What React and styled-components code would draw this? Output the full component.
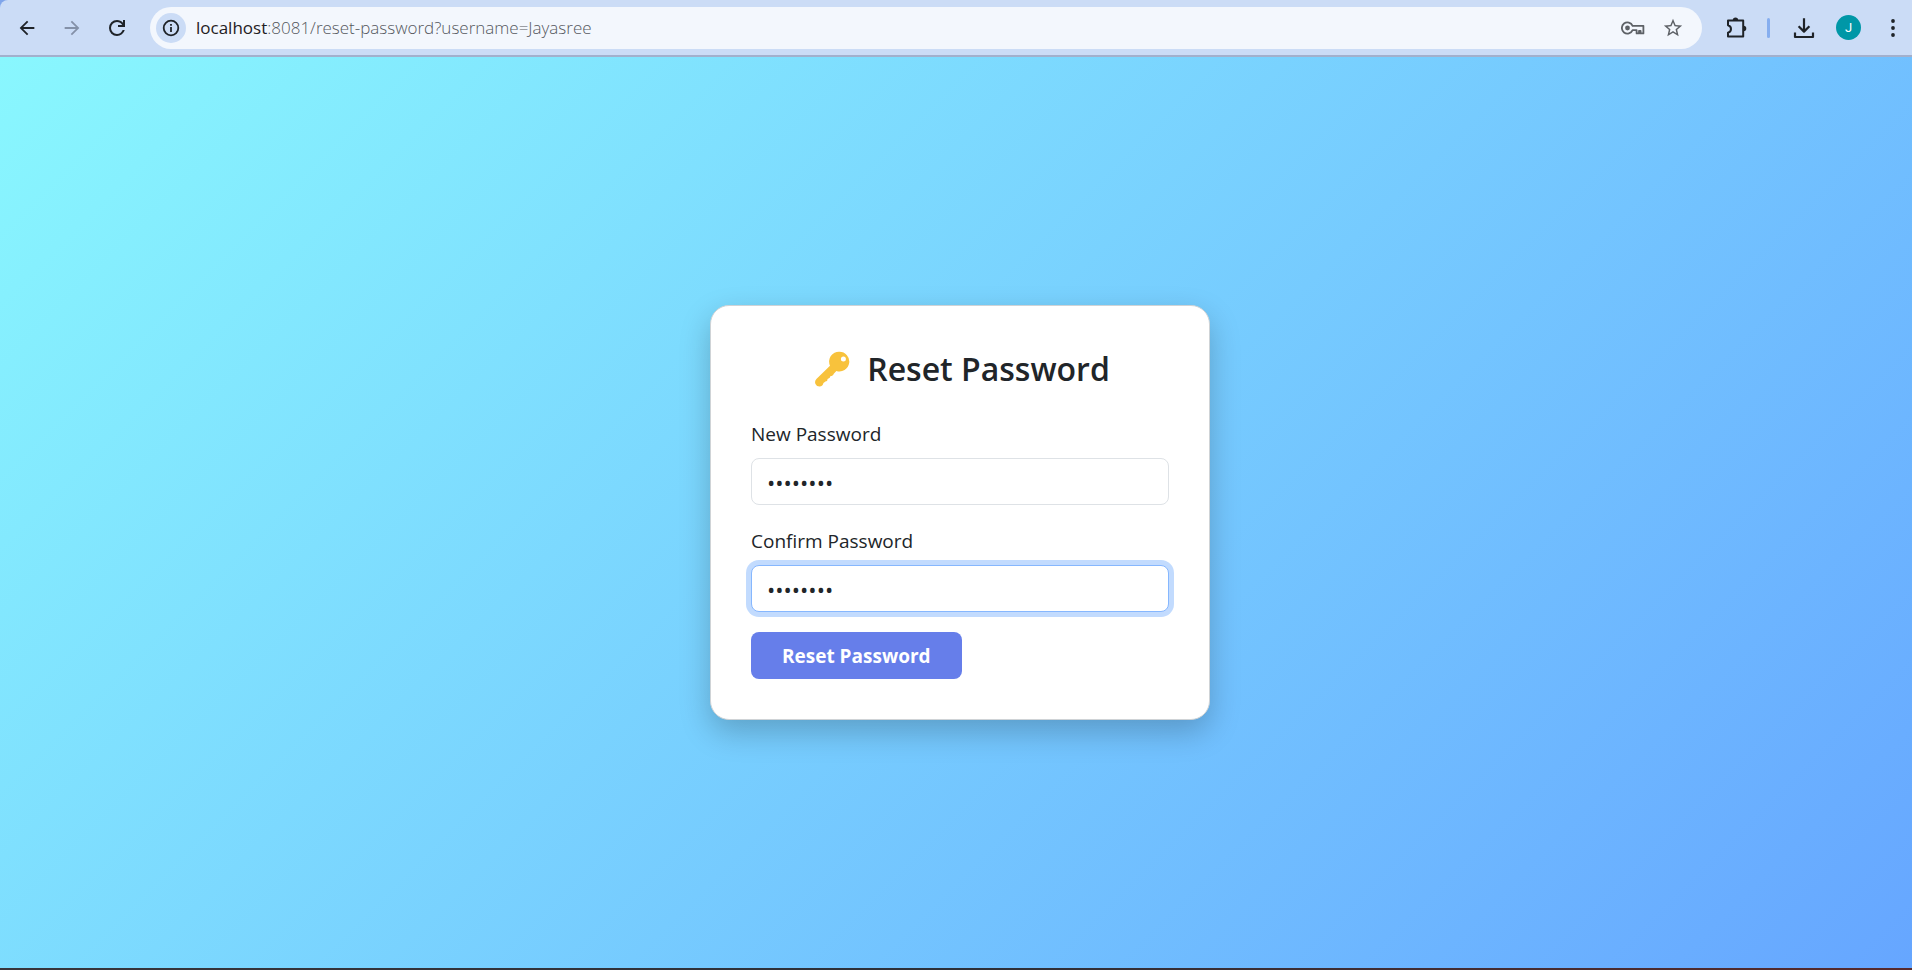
import React, { useState } from "react";
import styled, { createGlobalStyle } from "styled-components";

const GlobalStyle = createGlobalStyle`
  *, *::before, *::after { box-sizing: border-box; }
  body {
    margin: 0;
    color: #212529;
    font-family: "Open Sans", "Segoe UI", "Liberation Sans", sans-serif;
  }
`;

const Window = styled.div`
  display: flex;
  flex-direction: column;
  min-height: 100vh;
  background: #7fa5ea;
`;

const Toolbar = styled.header`
  display: flex;
  align-items: center;
  height: 57px;
  padding: 0 7px 0 15px;
  background: #cbdcf6;
  border-bottom: 2px solid #a2b0cd;
  border-top-left-radius: 8px;
`;

const NavButtons = styled.nav`
  display: flex;
  gap: 21px;
  margin-right: 21px;
`;

const IconButton = styled.button`
  display: grid;
  place-items: center;
  flex: none;
  width: 24px;
  height: 24px;
  padding: 0;
  border: 0;
  background: none;
  color: ${(p) => p.$color || "#1f2328"};
`;

const AddressBar = styled.div`
  display: flex;
  align-items: center;
  flex: 1;
  height: 42px;
  padding: 0 17px 0 6px;
  border-radius: 21px;
  background: #f3f7fd;
  font-size: 17px;
  font-weight: 300;
  line-height: 24px;
`;

const SiteInfo = styled.button`
  display: grid;
  place-items: center;
  flex: none;
  width: 30px;
  height: 30px;
  margin-right: 10px;
  padding: 0;
  border: 0;
  border-radius: 50%;
  background: #cbdcf6;
  color: #1f2328;
`;

const Host = styled.label`
  color: #1f2023;
  font-weight: 400;
`;

const UrlInput = styled.input`
  flex: 1;
  min-width: 0;
  padding: 0;
  border: 0;
  outline: 0;
  background: none;
  color: #55585d;
  font: inherit;
`;

const AddressActions = styled.div`
  display: flex;
  gap: 16px;
`;

const ToolbarActions = styled.div`
  display: flex;
  align-items: center;
  margin-left: 22px;
`;

const Divider = styled.span`
  width: 3px;
  height: 20px;
  margin: 0 22px 0 19px;
  border-radius: 2px;
  background: #86aeef;
`;

const Avatar = styled.button`
  width: 25px;
  height: 25px;
  margin: 0 20px;
  padding: 0;
  border: 0;
  border-radius: 50%;
  background: #0097a7;
  color: #fff;
  font: 13px/25px Roboto, sans-serif;
  text-align: center;
`;

const Page = styled.main`
  display: flex;
  flex: 1;
  align-items: center;
  justify-content: center;
  padding: 24px 0 24px 8px;
  background: linear-gradient(135deg, #89f7fe, #66a6ff);
`;

const Card = styled.section`
  width: 500px;
  max-width: 100%;
  padding: 40px;
  border: 1px solid #cfd3d6;
  border-radius: 19px;
  background: #fff;
  box-shadow: 0 12px 31px rgba(0, 0, 0, 0.22);
`;

const Title = styled.h1`
  display: flex;
  align-items: center;
  justify-content: center;
  gap: 17px;
  margin: 0 0 26px;
  padding-left: 4px;
  font-size: 32px;
  font-weight: 600;
  line-height: 46px;
`;

const Field = styled.div`
  margin-bottom: 20px;
`;

const Label = styled.label`
  display: block;
  margin-bottom: 8px;
  font-size: 19px;
  line-height: 32px;
`;

const PasswordInput = styled.input`
  display: block;
  width: 100%;
  height: 47px;
  padding: 0 15px;
  border: 1px solid ${(p) => (p.$active ? "#86b7fe" : "#dee2e6")};
  border-radius: 8px;
  outline: 0;
  background: #fff;
  box-shadow: ${(p) => (p.$active ? "0 0 0 5px #c2dbfe" : "none")};
  color: #212529;
  font-family: inherit;
  font-size: 22px;
`;

const SubmitButton = styled.button`
  display: block;
  height: 47px;
  padding: 0 31px;
  border: 0;
  border-radius: 8px;
  background: #667eea;
  color: #fff;
  font-family: inherit;
  font-size: 19px;
  font-weight: 700;
  line-height: 30px;
`;

const Taskbar = styled.footer`
  height: 2px;
  background: linear-gradient(90deg, #38353a, #2d3038 50%, #582a2c);
`;

function Icon({ size = 24, path }) {
  return (
    <svg width={size} height={size} viewBox="0 0 24 24" fill="currentColor" aria-hidden="true">
      <path d={path} />
    </svg>
  );
}

const BACK = "M20 11H7.83l5.59-5.59L12 4l-8 8 8 8 1.41-1.41L7.83 13H20v-2z";
const FORWARD = "M4 11h12.17l-5.59-5.59L12 4l8 8-8 8-1.41-1.41L16.17 13H4v-2z";
const RELOAD =
  "M12 20q-3.35 0-5.675-2.325T4 12t2.325-5.675T12 4q1.725 0 3.3.713T18 6.75V4h2v7h-7V9h4.2q-.8-1.4-2.187-2.2T12 6Q9.5 6 7.75 7.75T6 12t1.75 4.25T12 18q1.925 0 3.475-1.1T17.65 14h2.1q-.7 2.65-2.85 4.325T12 20";
const STAR =
  "M22 9.24l-7.19-.62L12 2 9.19 8.63 2 9.24l5.46 4.73L5.82 21 12 17.27 18.18 21l-1.63-7.03L22 9.24zM12 15.4l-3.76 2.27 1-4.28-3.32-2.88 4.38-.38L12 6.1l1.71 4.04 4.38.38-3.32 2.88 1 4.28L12 15.4z";

function InfoIcon() {
  return (
    <svg width="18" height="18" viewBox="0 0 18 18" aria-hidden="true">
      <circle cx="9" cy="9" r="7.3" fill="none" stroke="currentColor" strokeWidth="1.8" />
      <path d="M8.1 8h1.8v5H8.1zM8.1 5h1.8v1.8H8.1z" fill="currentColor" />
    </svg>
  );
}

function SavedKeyIcon() {
  return (
    <svg width="24" height="16" viewBox="0 0 24 16" fill="none" stroke="currentColor" strokeWidth="1.8" aria-hidden="true">
      <path d="M11.6 5.8A5.6 5.6 0 1 0 11.6 10.2H15.6V13.4H18V11H19.6V13.4H22.4V5.8z" strokeLinejoin="round" />
      <circle cx="6.5" cy="8" r="2.4" fill="currentColor" stroke="none" />
    </svg>
  );
}

function PuzzleIcon() {
  return (
    <svg width="24" height="24" viewBox="0 0 24 24" aria-hidden="true">
      <path
        d="M4 4.6H19.2V20.4H4V16.6C8 15.4 8 10.4 4 9.2z"
        fill="none"
        stroke="currentColor"
        strokeWidth="2"
        strokeLinejoin="round"
      />
      <path d="M8.8 4.2a2.7 2.7 0 0 1 5.4 0zM19.6 9.8a2.7 2.7 0 0 1 0 5.4z" fill="currentColor" />
    </svg>
  );
}

function DownloadIcon() {
  return (
    <svg width="24" height="24" viewBox="0 0 24 24" fill="none" stroke="currentColor" strokeWidth="2.2" aria-hidden="true">
      <path d="M12 2.3V15M6.6 10.2 12 15.6l5.4-5.4M3 16.6V21h18v-4.4" strokeLinejoin="round" />
    </svg>
  );
}

function MenuIcon() {
  return (
    <svg width="24" height="24" viewBox="0 0 24 24" fill="currentColor" aria-hidden="true">
      <circle cx="12" cy="5" r="1.9" />
      <circle cx="12" cy="12" r="1.9" />
      <circle cx="12" cy="19" r="1.9" />
    </svg>
  );
}

function GoldKey() {
  return (
    <svg width="36" height="36" viewBox="0 0 36 36" aria-hidden="true">
      <path
        fill="#f8c23c"
        fillRule="evenodd"
        d="M25.4.8a9.8 9.8 0 1 1-3 19.1l-2.6 2.8c-.5 1.4-1.7 2.3-3.3 2.4-.4 1.7-1.5 2.7-3 2.9.1 1.5-.8 2.4-2.1 2.6-.5.7-1.3 1.1-2 1.3.1 2-1.8 3.7-3.8 3.7a4.4 4.4 0 0 1-3.2-7.5L16 14.7A9.8 9.8 0 0 1 25.4.8zm4 4.7a2.5 2.5 0 1 0 0 5 2.5 2.5 0 0 0 0-5z"
      />
    </svg>
  );
}

function BrowserToolbar() {
  const [path, setPath] = useState(":8081/reset-password?username=Jayasree");
  return (
    <Toolbar>
      <NavButtons aria-label="History">
        <IconButton aria-label="Back"><Icon size={22} path={BACK} /></IconButton>
        <IconButton aria-label="Forward" $color="#8491a8"><Icon size={22} path={FORWARD} /></IconButton>
        <IconButton aria-label="Reload"><Icon path={RELOAD} /></IconButton>
      </NavButtons>
      <AddressBar>
        <SiteInfo aria-label="Site information"><InfoIcon /></SiteInfo>
        <Host htmlFor="url">localhost</Host>
        <UrlInput id="url" value={path} onChange={(e) => setPath(e.target.value)} />
        <AddressActions>
          <IconButton aria-label="Saved passwords" $color="#5d6166"><SavedKeyIcon /></IconButton>
          <IconButton aria-label="Bookmark" $color="#5d6166"><Icon size={22} path={STAR} /></IconButton>
        </AddressActions>
      </AddressBar>
      <ToolbarActions>
        <IconButton aria-label="Extensions"><PuzzleIcon /></IconButton>
        <Divider />
        <IconButton aria-label="Downloads"><DownloadIcon /></IconButton>
        <Avatar aria-label="Profile">J</Avatar>
        <IconButton aria-label="Menu"><MenuIcon /></IconButton>
      </ToolbarActions>
    </Toolbar>
  );
}

function PasswordField({ id, label, active }) {
  const [value, setValue] = useState("password");
  return (
    <Field>
      <Label htmlFor={id}>{label}</Label>
      <PasswordInput
        id={id}
        type="password"
        value={value}
        onChange={(e) => setValue(e.target.value)}
        $active={active}
      />
    </Field>
  );
}

export default function App() {
  return (
    <Window>
      <GlobalStyle />
      <BrowserToolbar />
      <Page>
        <Card>
          <Title><GoldKey />Reset Password</Title>
          <form onSubmit={(e) => e.preventDefault()}>
            <PasswordField id="new-password" label="New Password" />
            <PasswordField id="confirm-password" label="Confirm Password" active />
            <SubmitButton type="submit">Reset Password</SubmitButton>
          </form>
        </Card>
      </Page>
      <Taskbar />
    </Window>
  );
}
